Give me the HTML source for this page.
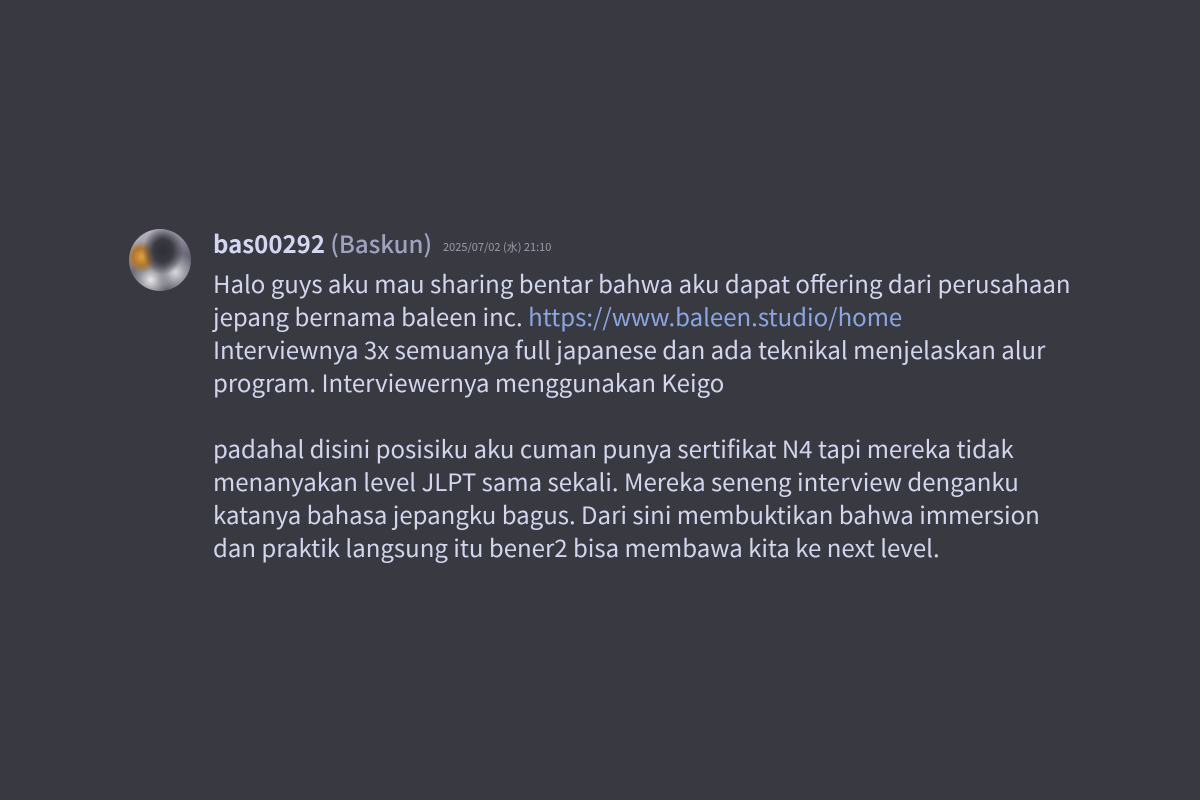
<!DOCTYPE html>
<html><head><meta charset="utf-8"><style>
html,body{margin:0;width:1200px;height:800px;background:#393a41;overflow:hidden}
body{font-family:"Noto Sans CJK JP","Liberation Sans",sans-serif;color:#d2d5ee}
.av{position:absolute;left:129px;top:229px;width:62px;height:62px;border-radius:50%;overflow:hidden;
background:radial-gradient(ellipse at 55% 35%,#2e2e36 0,#3a3a44 20%,transparent 42%),
radial-gradient(circle at 20% 45%,#e0a040 0,#b07830 14%,transparent 26%),
radial-gradient(circle at 75% 70%,#d8d8dc 0,#a0a0a8 14%,transparent 32%),
radial-gradient(circle at 35% 82%,#e8e8ea 0,#9a9aa0 16%,transparent 30%),
linear-gradient(160deg,#c8c6d0,#6a6878 55%,#54525f)}
.name{position:absolute;left:213px;top:226px;font-size:24px;white-space:nowrap;line-height:33px}
.name b{font-weight:700;color:#d4d7f2}
.name .n{color:#a0a2c0;font-weight:500}
.ts{font-size:11px;color:#9a9cab;margin-left:11px;vertical-align:2px}
.msg{position:absolute;left:213px;top:266px;font-size:24px;line-height:33px;white-space:nowrap}
a{color:#8aa6e2;text-decoration:none}
</style></head><body>
<div class="av"></div>
<div class="name"><b>bas00292</b> <span class="n">(Baskun)</span><span class="ts">2025/07/02 (水) 21:10</span></div>
<div class="msg">Halo guys aku mau sharing bentar bahwa aku dapat offering dari perusahaan<br>jepang bernama baleen inc. <a>https://www.baleen.studio/home</a><br>Interviewnya 3x semuanya full japanese dan ada teknikal menjelaskan alur<br>program. Interviewernya menggunakan Keigo<br><br>padahal disini posisiku aku cuman punya sertifikat N4 tapi mereka tidak<br>menanyakan level JLPT sama sekali. Mereka seneng interview denganku<br>katanya bahasa jepangku bagus. Dari sini membuktikan bahwa immersion<br>dan praktik langsung itu bener2 bisa membawa kita ke next level.</div>
</body></html>
